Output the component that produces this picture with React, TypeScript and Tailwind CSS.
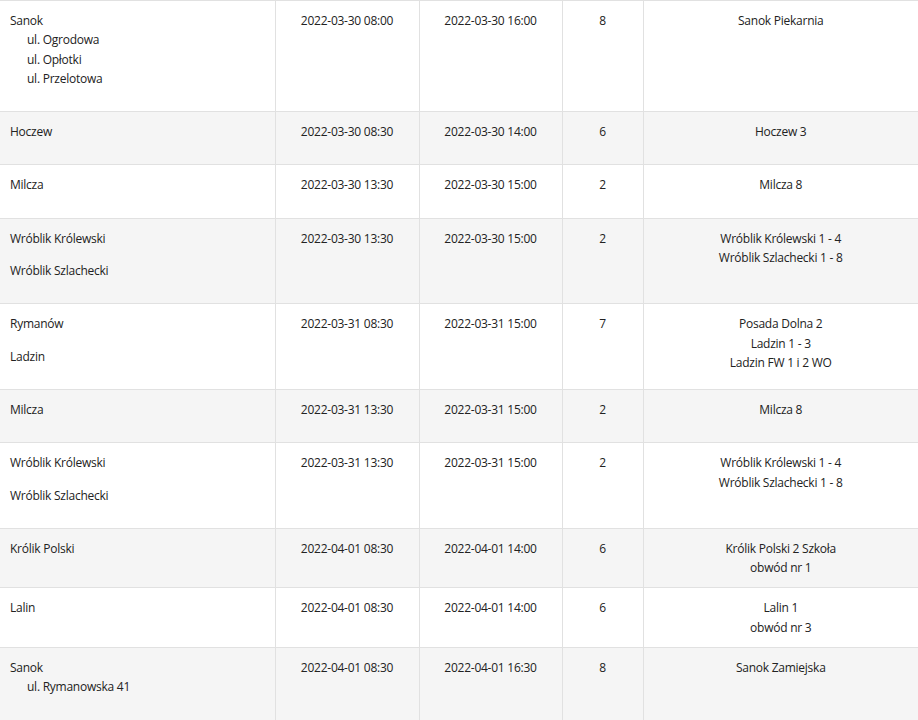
import React from "react";

type Row = {
  place: { main: string; subs?: string[] }[];
  start: string;
  end: string;
  hours: string;
  station: string[];
};

const rows: Row[] = [
  {
    place: [{ main: "Sanok", subs: ["ul. Ogrodowa", "ul. Opłotki", "ul. Przelotowa"] }],
    start: "2022-03-30 08:00",
    end: "2022-03-30 16:00",
    hours: "8",
    station: ["Sanok Piekarnia"],
  },
  { place: [{ main: "Hoczew" }], start: "2022-03-30 08:30", end: "2022-03-30 14:00", hours: "6", station: ["Hoczew 3"] },
  { place: [{ main: "Milcza" }], start: "2022-03-30 13:30", end: "2022-03-30 15:00", hours: "2", station: ["Milcza 8"] },
  {
    place: [{ main: "Wróblik Królewski" }, { main: "Wróblik Szlachecki" }],
    start: "2022-03-30 13:30",
    end: "2022-03-30 15:00",
    hours: "2",
    station: ["Wróblik Królewski 1 - 4", "Wróblik Szlachecki 1 - 8"],
  },
  {
    place: [{ main: "Rymanów" }, { main: "Ladzin" }],
    start: "2022-03-31 08:30",
    end: "2022-03-31 15:00",
    hours: "7",
    station: ["Posada Dolna 2", "Ladzin 1 - 3", "Ladzin FW 1 i 2 WO"],
  },
  { place: [{ main: "Milcza" }], start: "2022-03-31 13:30", end: "2022-03-31 15:00", hours: "2", station: ["Milcza 8"] },
  {
    place: [{ main: "Wróblik Królewski" }, { main: "Wróblik Szlachecki" }],
    start: "2022-03-31 13:30",
    end: "2022-03-31 15:00",
    hours: "2",
    station: ["Wróblik Królewski 1 - 4", "Wróblik Szlachecki 1 - 8"],
  },
  {
    place: [{ main: "Królik Polski" }],
    start: "2022-04-01 08:30",
    end: "2022-04-01 14:00",
    hours: "6",
    station: ["Królik Polski 2 Szkoła", "obwód nr 1"],
  },
  {
    place: [{ main: "Lalin" }],
    start: "2022-04-01 08:30",
    end: "2022-04-01 14:00",
    hours: "6",
    station: ["Lalin 1", "obwód nr 3"],
  },
  {
    place: [{ main: "Sanok", subs: ["ul. Rymanowska 41"] }],
    start: "2022-04-01 08:30",
    end: "2022-04-01 16:30",
    hours: "8",
    station: ["Sanok Zamiejska"],
  },
];

export default function App() {
  return (
    <div
      className="w-[918px] h-[720px] overflow-hidden bg-white text-[#222] text-[12px] leading-[19.3px] tracking-[-0.25px]"
      style={{ fontFamily: '"Open Sans", "Noto Sans", sans-serif' }}
    >
      <table className="w-[918px] table-fixed border-collapse">
        <colgroup>
          <col className="w-[275px]" />
          <col className="w-[144px]" />
          <col className="w-[143px]" />
          <col className="w-[81px]" />
          <col />
        </colgroup>
        <tbody>
          {rows.map((r, i) => (
            <tr key={i} className={i % 2 === 1 ? "bg-[#f5f5f5] border-t border-[#e1e1e1]" : "bg-white border-t border-[#e1e1e1]"}>
              <td className="align-top px-[10px] py-[10px] border-r border-[#e1e1e1]">
                {r.place.map((p, j) => (
                  <div key={j} className="mb-[13px]">
                    <div>{p.main}</div>
                    {p.subs && (
                      <div className="pl-[17px]">
                        {p.subs.map((s) => (
                          <div key={s}>{s}</div>
                        ))}
                      </div>
                    )}
                  </div>
                ))}
              </td>
              <td className="align-top text-center py-[10px] border-r border-[#e1e1e1]">{r.start}</td>
              <td className="align-top text-center py-[10px] border-r border-[#e1e1e1]">{r.end}</td>
              <td className="align-top text-center py-[10px] border-r border-[#e1e1e1]">{r.hours}</td>
              <td className="align-top text-center py-[10px]">
                {r.station.map((s) => (
                  <div key={s}>{s}</div>
                ))}
              </td>
            </tr>
          ))}
        </tbody>
      </table>
    </div>
  );
}
